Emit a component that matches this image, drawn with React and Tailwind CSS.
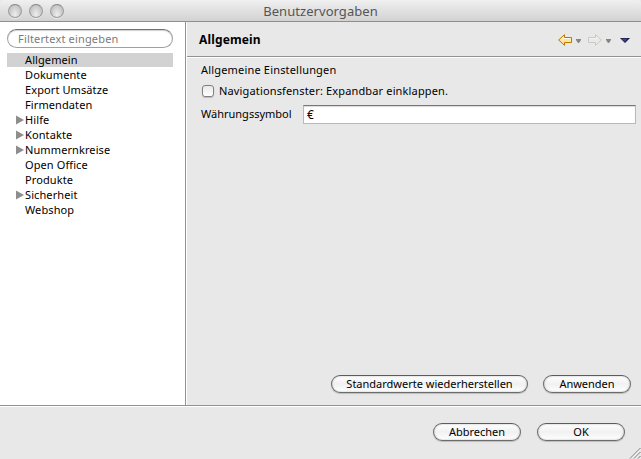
const tree = [
  { label: "Allgemein", selected: true },
  { label: "Dokumente" },
  { label: "Export Umsätze" },
  { label: "Firmendaten" },
  { label: "Hilfe", parent: true },
  { label: "Kontakte", parent: true },
  { label: "Nummernkreise", parent: true },
  { label: "Open Office" },
  { label: "Produkte" },
  { label: "Sicherheit", parent: true },
  { label: "Webshop" },
];

function WindowButton() {
  return (
    <span className="h-3.5 w-3.5 rounded-full border border-[#9b9b9b] border-t-[#858585] bg-radial-[at_50%_80%] from-[#eeeeee] to-[#b4b4b4] shadow-[0_1px_0_#ffffff90]" />
  );
}

function Button({ className, children }) {
  return (
    <button
      className={`flex h-[18px] items-center justify-center rounded-full border border-[#6c6c6c] border-t-[#5c5c5c] bg-linear-to-b from-white via-[#f1f1f1] to-white pb-px whitespace-nowrap shadow-[0_1px_1px_#00000030,inset_0_0_2px_#00000050] ${className}`}
    >
      {children}
    </button>
  );
}

function Arrow({ fill, stroke, light, className }) {
  return (
    <svg width="14" height="12" viewBox="0 0 14 12" className={className}>
      <path d="M0.7 6L6.5 0.7V3.5H13.5V8.5H6.5V11.3Z" fill={fill} stroke={stroke} />
      <path d="M3 5.5L5.5 3V4.5H12.5" fill="none" stroke={light} />
    </svg>
  );
}

function SmallTriangle() {
  return (
    <svg width="5" height="4" viewBox="0 0 5 4">
      <path d="M0 0h5v1L3 4H2L0 1z" fill="#858585" />
    </svg>
  );
}

export default function App() {
  return (
    <div className="flex h-[459px] w-[641px] flex-col overflow-hidden bg-[#e8e8e8] font-['Noto_Sans','Open_Sans',sans-serif] text-[11px] leading-[15px] text-black">
      <header className="grid h-[22px] shrink-0 grid-cols-[1fr_auto_1fr] items-center rounded-t border-b border-[#8f8f8f] bg-linear-to-b from-[#f0f0f0] to-[#d2d2d2]">
        <div className="flex gap-[7px] pl-2">
          <WindowButton />
          <WindowButton />
          <WindowButton />
        </div>
        <h1 className="pt-0.5 text-[13px] leading-[17px] tracking-[0.05px] text-[#555]">Benutzervorgaben</h1>
      </header>

      <div className="flex h-[383px] shrink-0">
        <aside className="w-[186px] shrink-0 border-r border-[#929292] bg-white px-[7px] pt-[7px]">
          <div className="flex h-[19px] w-[166px] items-center rounded-full border border-[#a0a0a0] border-t-[#707070] bg-white pl-2.5 tracking-[0.17px] text-[#7b7b7b] shadow-[inset_0_1px_1px_#00000030]">
            Filtertext eingeben
          </div>
          <ul className="mt-1 w-[166px]">
            {tree.map((item) => (
              <li key={item.label} className="flex h-[15px] items-center">
                <div className={`flex h-3.5 w-full items-center ${item.selected ? "bg-[#d2d2d2]" : ""}`}>
                  <span className="flex w-[18px] shrink-0 pl-[9px]">
                    {item.parent && (
                      <svg width="8" height="10" viewBox="0 0 8 10">
                        <path d="M0 0.5L8 5L0 9.5z" fill="#8e8e8e" />
                      </svg>
                    )}
                  </span>
                  <span className="tracking-[0.1px] whitespace-nowrap">{item.label}</span>
                </div>
              </li>
            ))}
          </ul>
        </aside>

        <main className="flex flex-1 flex-col border-l border-white">
          <div className="flex h-[35px] shrink-0 items-center border-b border-[#929292] pr-[11px] pl-3">
            <h2 className="flex-1 pt-[2px] text-xs font-bold tracking-[0.15px]">Allgemein</h2>
            <Arrow fill="#ffe49a" stroke="#b97907" light="#fffbe0" className="mt-0.5" />
            <span className="mt-[3px] ml-1"><SmallTriangle /></span>
            <Arrow fill="#e9e9e6" stroke="#c9c9c7" light="#f3f3f1" className="mt-0.5 ml-[7px] -scale-x-100" />
            <span className="mt-[3px] ml-1"><SmallTriangle /></span>
            <svg width="10" height="5" viewBox="0 0 10 5" className="mt-[3px] ml-[9px]">
              <path d="M0 0h10L5 5z" fill="#111133" />
              <path d="M1 0.5h7L5 4z" fill="#40408c" />
            </svg>
          </div>
          <div className="flex flex-1 flex-col border-t border-white pr-[5px] pl-3.5">
            <p className="mt-1 tracking-[0.18px]">Allgemeine Einstellungen</p>
            <label className="mt-[6px] flex items-center">
              <span className="ml-px h-3 w-3 rounded-[3px] border border-[#808080] bg-linear-to-b from-[#e9e9e9] to-white shadow-[0_1px_1px_#00000030]" />
              <span className="ml-[5px] tracking-[0.15px] whitespace-nowrap">Navigationsfenster: Expandbar einklappen.</span>
            </label>
            <div className="mt-[7px] flex items-center">
              <span className="w-[102px] pb-0.5">Währungssymbol</span>
              <div className="flex h-[19px] flex-1 items-center border border-[#b9b9b9] border-t-[#777] bg-white pl-[3px] text-xs shadow-[inset_0_1px_1px_#00000025]">€</div>
            </div>
            <div className="mt-auto mr-[5px] mb-3 flex justify-end gap-[15px]">
              <Button className="w-[197px]">Standardwerte wiederherstellen</Button>
              <Button className="w-[88px]">Anwenden</Button>
            </div>
          </div>
        </main>
      </div>

      <footer className="relative flex flex-1 justify-end gap-4 border-t border-[#929292] pt-[17px] pr-4 shadow-[inset_0_1px_0_#fff]">
        <Button className="w-[88px]">Abbrechen</Button>
        <Button className="w-[88px]">OK</Button>
        <svg width="12" height="12" viewBox="0 0 12 12" className="absolute right-0 bottom-0">
          <path d="M1 11.5L11.5 1M5 11.5L11.5 5M9 11.5L11.5 9" stroke="#777" fill="none" />
          <path d="M2.2 11.5L11.5 2.2M6.2 11.5L11.5 6.2" stroke="#fff" strokeWidth="0.6" fill="none" />
        </svg>
      </footer>
    </div>
  );
}
